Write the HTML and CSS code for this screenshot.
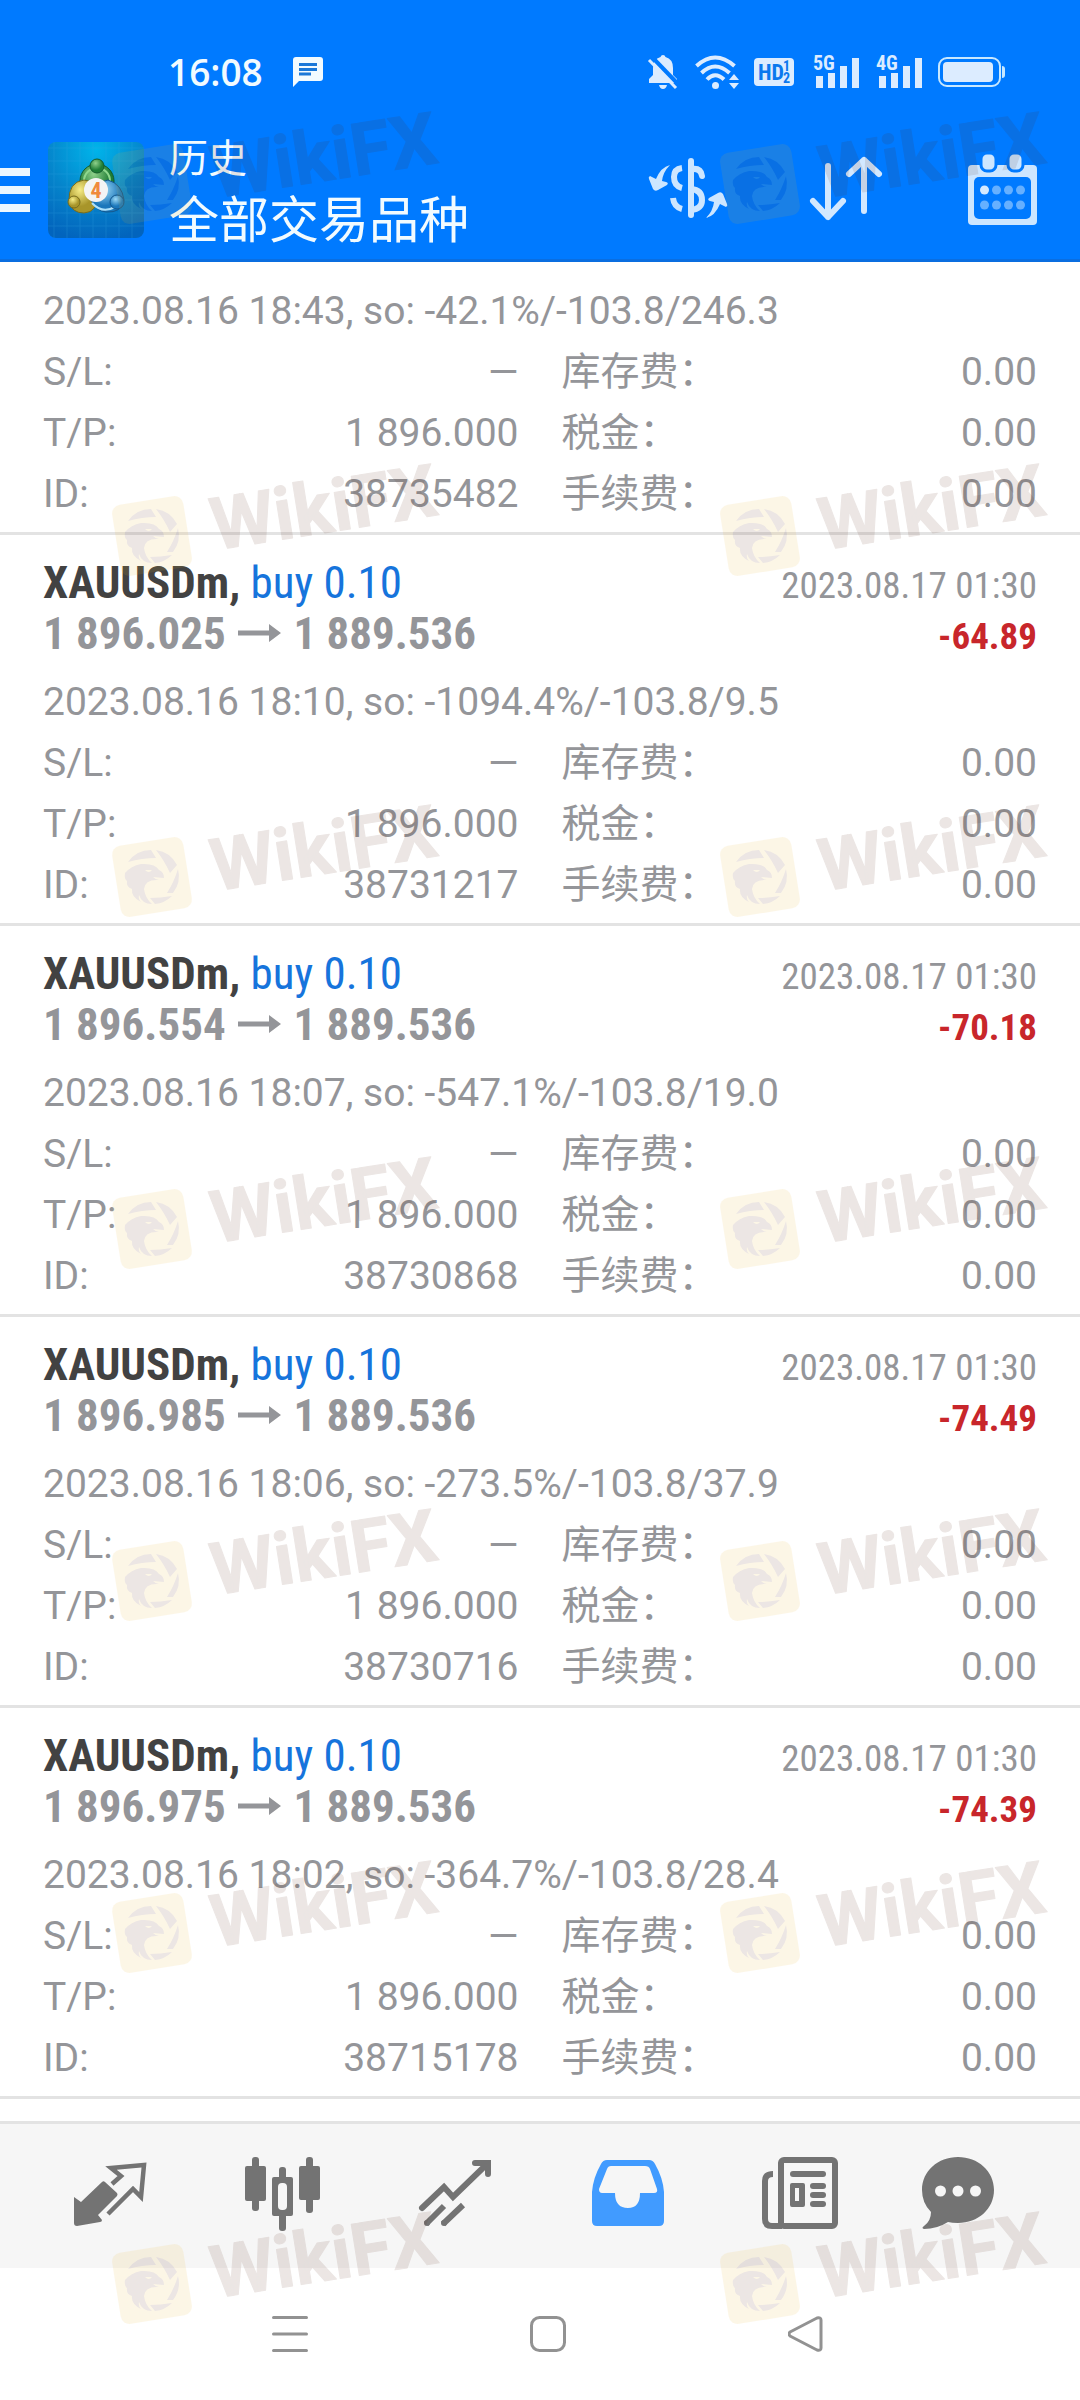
FILE: index.html
```html
<!DOCTYPE html>
<html lang="zh-CN">

<head>
    <meta charset="UTF-8">
    <meta name="viewport" content="width=device-width, initial-scale=1.0">
    <title>历史 - 全部交易品种</title>
    <link rel="stylesheet" href="styles.css">
</head>

<body>
    <header class="header">
        <div class="status-bar">
            <span class="clock">16:08</span>
            <svg class="chat-icon" width="30" height="30" viewBox="0 0 30 30">
                <path fill="#f2fbff" d="M3 0H27Q30 0 30 3V21Q30 24 27 24H6L0 30V3Q0 0 3 0Z" />
                <path stroke="#1a78d8" stroke-width="3" d="M6 7.500H24M6 12.500H24M6 17H18" />
            </svg>
            <div class="status-icons">
                <svg width="30" height="34" viewBox="0 0 30 34">
                    <path fill="#dcecff" d="M15 0Q17 0 17.500 2Q25 4 25 13V20L29 24V28H1V24L5 20V13Q5 4 12.500 2Q13 0 15 0ZM11 30H19Q18 34 15 34Q12 34 11 30Z" />
                    <path stroke="#007aff" stroke-width="4" d="M3 1L31 30" />
                    <path stroke="#dcecff" stroke-width="3" d="M1 5L28 33" />
                </svg>
                <svg class="wifi" width="45" height="34" viewBox="0 0 45 34">
                    <g fill="none" stroke="#dcecff" stroke-width="4">
                        <path d="M1.500 11Q20 -6 39.500 11" />
                        <path d="M6.500 18Q20 5 34.500 18" />
                        <path d="M12 24.500Q20 16 29 24.500" />
                    </g>
                    <circle cx="20.500" cy="30.500" r="3.500" fill="#dcecff" />
                    <path fill="#dcecff" d="M34 25L39 19L44 25ZM34 28L39 34L44 28Z" />
                </svg>
                <svg class="hd" width="40" height="28" viewBox="0 0 40 28">
                    <rect width="40" height="28" rx="4" fill="#dcecff" />
                    <text class="cond" x="4" y="22" font-size="22" fill="#0b78ee">HD</text>
                    <text class="cond" x="29" y="13" font-size="14" fill="#0b78ee">1</text>
                    <text class="cond" x="29" y="25" font-size="14" fill="#0b78ee">2</text>
                </svg>
                <svg class="signal" width="46" height="34" viewBox="0 0 46 34">
                    <text class="cond" x="0" y="15" font-size="20" fill="#dcecff">5G</text>
                    <path fill="#dcecff" d="M3 21H10V33H3ZM15 18H22V33H15ZM27 11H34V33H27ZM39 3H46V33H39Z" />
                </svg>
                <svg class="signal" width="46" height="34" viewBox="0 0 46 34">
                    <text class="cond" x="0" y="15" font-size="20" fill="#dcecff">4G</text>
                    <path fill="#dcecff" d="M3 21H10V33H3ZM15 18H22V33H15ZM27 11H34V33H27ZM39 3H46V33H39Z" />
                </svg>
                <svg width="67" height="30" viewBox="0 0 67 30">
                    <rect x="1" y="1" width="61" height="28" rx="8" fill="none" stroke="#c8e8ff" stroke-width="2" />
                    <rect x="5" y="5" width="50" height="20" rx="4" fill="#dcecff" />
                    <path fill="#c8e8ff" d="M64 9Q67 9 67 12V18Q67 21 64 21Z" />
                </svg>
            </div>
        </div>
        <div class="app-bar">
            <button class="menu-button" type="button" aria-label="菜单">
                <svg width="30" height="44" viewBox="0 0 30 44">
                    <path fill="#edf8ff" d="M0 0H30V8H0ZM0 18H30V26H0ZM0 36H30V44H0Z" />
                </svg>
            </button>
            <svg class="app-icon" viewBox="0 0 96 96">
                <defs>
                    <radialGradient id="tile" cx="50%" cy="8%" r="95%">
                        <stop offset="0" stop-color="#00b4ea" />
                        <stop offset="0.550" stop-color="#0584cb" />
                        <stop offset="1" stop-color="#0264bd" />
                    </radialGradient>
                    <radialGradient id="green" cx="40%" cy="30%">
                        <stop offset="0" stop-color="#8fd08a" />
                        <stop offset="1" stop-color="#1f7d35" />
                    </radialGradient>
                    <radialGradient id="gold" cx="40%" cy="30%">
                        <stop offset="0" stop-color="#f6ec86" />
                        <stop offset="1" stop-color="#a8952a" />
                    </radialGradient>
                    <radialGradient id="sky" cx="40%" cy="30%">
                        <stop offset="0" stop-color="#9bd8f5" />
                        <stop offset="1" stop-color="#1b77bb" />
                    </radialGradient>
                </defs>
                <rect width="96" height="96" rx="8" fill="url(#tile)" />
                <path stroke="#38a6e4" stroke-width="1" opacity="0.250" d="M6 0V96M19 0V96M32 0V96M45 0V96M58 0V96M71 0V96M84 0V96M0 6H96M0 19H96M0 32H96M0 45H96M0 58H96M0 71H96M0 84H96" />
                <circle cx="49" cy="39" r="17" fill="url(#green)" stroke="#145c2b" />
                <circle cx="49" cy="39" r="13" fill="none" stroke="#8ed78d" stroke-width="2" />
                <path d="M21 60Q20 40 36 38Q46 38 48 54Q50 70 36 71Q24 71 21 60Z" fill="url(#gold)" stroke="#776c1c" />
                <path d="M43 58Q46 40 60 38Q74 42 76 58Q74 71 58 70Q48 69 43 58Z" fill="url(#sky)" stroke="#14578d" />
                <path d="M44 61Q54 72 67 65" fill="none" stroke="#b0e2fa" stroke-width="2" />
                <circle cx="49" cy="24" r="7" fill="url(#green)" stroke="#145c2b" />
                <circle cx="26" cy="60" r="6" fill="url(#gold)" stroke="#776c1c" />
                <circle cx="69" cy="60" r="7" fill="url(#sky)" stroke="#14578d" />
                <circle cx="48" cy="48" r="12" fill="#f4f4f4" />
                <text class="cond" x="48" y="56" font-size="22" text-anchor="middle" fill="#f08a3c">4</text>
            </svg>
            <div class="titles">
                <h1>历史</h1>
                <p>全部交易品种</p>
            </div>
            <div class="actions">
                <button type="button" aria-label="货币">
                    <svg width="80" height="64" viewBox="0 0 80 64">
                        <g fill="none" stroke="#cde6ff" stroke-width="6">
                            <path stroke-linecap="round" d="M43 5V59" />
                            <path stroke-linecap="round" d="M44 13Q53 12 54 20" />
                            <path d="M43 33Q54 34 54 44Q54 53 43 54" />
                            <path d="M34 12Q26 13 26 21Q26 30 34 32M25 42Q26 51 34 53" />
                        </g>
                        <path id="swap-arrow" fill="#cde6ff" d="M22 9Q13 11 8 23L2 20Q0 21 1 23L5 33Q7 36 10 34L19 29Q21 27 18 26L14 25Q15 16 22 9Z" />
                        <use href="#swap-arrow" transform="rotate(180 40 35.500)" />
                    </svg>
                </button>
                <button type="button" aria-label="排序">
                    <svg width="80" height="68" viewBox="0 0 80 68">
                        <path fill="none" stroke="#d2e8ff" stroke-width="6" stroke-linecap="round" stroke-linejoin="round" d="M20 12V63M5 47L20 63L35 47M56 57V6M41 20L56 6L71 20" />
                    </svg>
                </button>
                <button type="button" aria-label="日期">
                    <svg width="69" height="74" viewBox="0 0 69 74">
                        <rect y="14" width="69" height="60" rx="4" fill="#cde6ff" />
                        <rect x="6" y="26" width="57" height="42" rx="5" fill="#007aff" />
                        <g fill="#cde6ff" stroke="#007aff" stroke-width="3">
                            <rect x="13" y="2" width="15" height="18" rx="6" />
                            <rect x="40" y="2" width="15" height="18" rx="6" />
                        </g>
                        <circle cx="16.500" cy="39" r="4.500" fill="#d5eaff" />
                        <g fill="#66b0ff">
                            <circle cx="28.500" cy="39" r="4.500" />
                            <circle cx="40.500" cy="39" r="4.500" />
                            <circle cx="52.500" cy="39" r="4.500" />
                            <circle cx="16.500" cy="54" r="4.500" />
                            <circle cx="28.500" cy="54" r="4.500" />
                            <circle cx="40.500" cy="54" r="4.500" />
                            <circle cx="52.500" cy="54" r="4.500" />
                        </g>
                    </svg>
                </button>
            </div>
        </div>
    </header>

    <main class="history">
        <!-- first deal is scrolled under the header, only its details show -->
        <section class="deal deal-scrolled">
            <p class="comment">2023.08.16 18:43, so: -42.1%/-103.8/246.3</p>
            <dl class="details">
                <div><dt>S/L:</dt><dd>—</dd></div>
                <div><dt>库存费：</dt><dd>0.00</dd></div>
                <div><dt>T/P:</dt><dd>1 896.000</dd></div>
                <div><dt>税金：</dt><dd>0.00</dd></div>
                <div><dt>ID:</dt><dd>38735482</dd></div>
                <div><dt>手续费：</dt><dd>0.00</dd></div>
            </dl>
        </section>

        <section class="deal">
            <div class="deal-row">
                <h2>XAUUSDm, <span class="side">buy 0.10</span></h2>
                <time>2023.08.17 01:30</time>
            </div>
            <div class="deal-row">
                <p class="prices">1 896.025 <svg class="arrow" viewBox="0 0 43 18"><path d="M0 6.500H31V0L43 9L31 18V11.500H0Z" /></svg> 1 889.536</p>
                <span class="profit">-64.89</span>
            </div>
            <p class="comment">2023.08.16 18:10, so: -1094.4%/-103.8/9.5</p>
            <dl class="details">
                <div><dt>S/L:</dt><dd>—</dd></div>
                <div><dt>库存费：</dt><dd>0.00</dd></div>
                <div><dt>T/P:</dt><dd>1 896.000</dd></div>
                <div><dt>税金：</dt><dd>0.00</dd></div>
                <div><dt>ID:</dt><dd>38731217</dd></div>
                <div><dt>手续费：</dt><dd>0.00</dd></div>
            </dl>
        </section>

        <section class="deal">
            <div class="deal-row">
                <h2>XAUUSDm, <span class="side">buy 0.10</span></h2>
                <time>2023.08.17 01:30</time>
            </div>
            <div class="deal-row">
                <p class="prices">1 896.554 <svg class="arrow" viewBox="0 0 43 18"><path d="M0 6.500H31V0L43 9L31 18V11.500H0Z" /></svg> 1 889.536</p>
                <span class="profit">-70.18</span>
            </div>
            <p class="comment">2023.08.16 18:07, so: -547.1%/-103.8/19.0</p>
            <dl class="details">
                <div><dt>S/L:</dt><dd>—</dd></div>
                <div><dt>库存费：</dt><dd>0.00</dd></div>
                <div><dt>T/P:</dt><dd>1 896.000</dd></div>
                <div><dt>税金：</dt><dd>0.00</dd></div>
                <div><dt>ID:</dt><dd>38730868</dd></div>
                <div><dt>手续费：</dt><dd>0.00</dd></div>
            </dl>
        </section>

        <section class="deal">
            <div class="deal-row">
                <h2>XAUUSDm, <span class="side">buy 0.10</span></h2>
                <time>2023.08.17 01:30</time>
            </div>
            <div class="deal-row">
                <p class="prices">1 896.985 <svg class="arrow" viewBox="0 0 43 18"><path d="M0 6.500H31V0L43 9L31 18V11.500H0Z" /></svg> 1 889.536</p>
                <span class="profit">-74.49</span>
            </div>
            <p class="comment">2023.08.16 18:06, so: -273.5%/-103.8/37.9</p>
            <dl class="details">
                <div><dt>S/L:</dt><dd>—</dd></div>
                <div><dt>库存费：</dt><dd>0.00</dd></div>
                <div><dt>T/P:</dt><dd>1 896.000</dd></div>
                <div><dt>税金：</dt><dd>0.00</dd></div>
                <div><dt>ID:</dt><dd>38730716</dd></div>
                <div><dt>手续费：</dt><dd>0.00</dd></div>
            </dl>
        </section>

        <section class="deal">
            <div class="deal-row">
                <h2>XAUUSDm, <span class="side">buy 0.10</span></h2>
                <time>2023.08.17 01:30</time>
            </div>
            <div class="deal-row">
                <p class="prices">1 896.975 <svg class="arrow" viewBox="0 0 43 18"><path d="M0 6.500H31V0L43 9L31 18V11.500H0Z" /></svg> 1 889.536</p>
                <span class="profit">-74.39</span>
            </div>
            <p class="comment">2023.08.16 18:02, so: -364.7%/-103.8/28.4</p>
            <dl class="details">
                <div><dt>S/L:</dt><dd>—</dd></div>
                <div><dt>库存费：</dt><dd>0.00</dd></div>
                <div><dt>T/P:</dt><dd>1 896.000</dd></div>
                <div><dt>税金：</dt><dd>0.00</dd></div>
                <div><dt>ID:</dt><dd>38715178</dd></div>
                <div><dt>手续费：</dt><dd>0.00</dd></div>
            </dl>
        </section>
    </main>

    <nav class="tabs">
        <a href="#quotes" aria-label="行情">
            <svg viewBox="0 0 76 76">
                <path fill="#737373" d="M30 26Q31.500 24.500 33 26L45 37Q46 38.500 45 40L26 59L30 64Q30 66 28 66L5 70Q2 70 2 67V41L9 46Z" />
                <path fill="none" stroke="#737373" stroke-width="4.500" d="M40 28L49 20L39 12L72 9L69 41L61 33L36 58" />
            </svg>
        </a>
        <a href="#charts" aria-label="图表">
            <svg viewBox="0 0 76 76">
                <g fill="#737373">
                    <rect x="7" y="1" width="7" height="54" rx="3" />
                    <rect x="0" y="10" width="21" height="35" rx="2" />
                    <rect x="34" y="11" width="7" height="64" rx="3" />
                    <rect x="27" y="21" width="21" height="39" rx="2" />
                    <rect x="61" y="1" width="7" height="56" rx="3" />
                    <rect x="54" y="10" width="21" height="34" rx="2" />
                </g>
                <rect x="33" y="27" width="9" height="27" rx="4" fill="#f6f6f6" />
            </svg>
        </a>
        <a href="#trade" aria-label="交易">
            <svg viewBox="0 0 76 76">
                <g fill="none" stroke="#737373" stroke-width="6">
                    <path stroke-linecap="round" d="M5 52L27 31L36 41L70 8M58 7H71V18" />
                    <path d="M9 68L27 50M26 68L46 49" />
                </g>
                <circle cx="10" cy="67" r="3" fill="#737373" />
                <circle cx="27" cy="67" r="3" fill="#737373" />
            </svg>
        </a>
        <a class="active" href="#history" aria-label="历史">
            <svg viewBox="0 0 76 76">
                <path fill="#419bff" fill-rule="evenodd" d="M17 4H59Q63 4 65 8Q73 22 74 36V65Q74 70 69 70H7Q2 70 2 65V36Q3 22 11 8Q13 4 17 4ZM21 10Q18 10 17 13L9 33Q9 37 12 37H25Q25 52 38 52Q50 52 50 37H64Q68 37 67 33L60 13Q59 10 55 10Z" />
            </svg>
        </a>
        <a href="#news" aria-label="新闻">
            <svg viewBox="0 0 76 76">
                <g fill="none" stroke="#737373" stroke-width="6">
                    <rect x="19" y="4" width="54" height="66" rx="3" />
                    <path d="M11 18Q3 18 3 25V63Q3 70 10 70H20" />
                </g>
                <g fill="#737373">
                    <rect x="28" y="15" width="36" height="6" rx="3" />
                    <path fill-rule="evenodd" d="M30 27H41Q43 27 43 29V49Q43 51 41 51H30Q28 51 28 49V29Q28 27 30 27ZM33 32V45H37V32Z" />
                    <rect x="48" y="27" width="16" height="6" rx="3" />
                    <rect x="48" y="36" width="16" height="6" rx="3" />
                    <rect x="48" y="45" width="16" height="6" rx="3" />
                </g>
            </svg>
        </a>
        <a href="#chat" aria-label="聊天">
            <svg viewBox="0 0 76 76">
                <path fill="#737373" d="M38 1C58 1 74 15 74 34C74 53 58 67 38 67Q32 67 28 66Q17 73 4 73Q1 72 4 70Q11 65 11 56Q2 47 2 34C2 15 18 1 38 1Z" />
                <g fill="#f6f6f6">
                    <circle cx="20.500" cy="35" r="5.500" />
                    <circle cx="38" cy="35" r="5.500" />
                    <circle cx="55.500" cy="35" r="5.500" />
                </g>
            </svg>
        </a>
    </nav>

    <div class="system-nav">
        <button type="button" aria-label="最近任务">
            <svg viewBox="0 0 36 36">
                <path stroke="#929292" stroke-width="3" stroke-linecap="round" d="M1.500 1.500H34.500M1.500 18H34.500M1.500 34.500H34.500" />
            </svg>
        </button>
        <button type="button" aria-label="主屏幕">
            <svg viewBox="0 0 36 36">
                <rect x="1.500" y="1.500" width="33" height="33" rx="8" fill="none" stroke="#929292" stroke-width="3" />
            </svg>
        </button>
        <button type="button" aria-label="返回">
            <svg viewBox="0 0 36 36">
                <path fill="none" stroke="#929292" stroke-width="3" stroke-linejoin="round" d="M2 20Q0 18 2 16L29 2Q33 1 33 4V32Q33 35 29 34Z" />
            </svg>
        </button>
    </div>

    <svg class="watermarks" aria-hidden="true">
        <defs>
            <g id="watermark" opacity="0.110">
                <rect fill="#edb62a" transform="rotate(-9)" x="-36" y="-36" width="72" height="72" rx="9" />
                <g fill="#582412">
                    <path d="M-24 -15A28 28 0 0 1 -1 -27L4 -19Q-10 -19 -24 -15Z" />
                    <path d="M4 -27A28 28 0 0 1 25 -12L18 -4Q12 -17 4 -27Z" />
                    <path d="M26 -8A28 28 0 0 1 21 16L15 16Q22 5 26 -8Z" />
                    <path d="M20 19A28 28 0 0 1 3 27L-2 21Q8 21 20 19Z" />
                    <path fill-rule="evenodd" d="M-27 -4Q-21 -11 -11 -13Q3 -14 7 -7Q12 -5 12 1L1 0Q4 3 7 3Q-7 2 -8 12Q-7 21 0 27Q-10 27 -13 18Q-14 22 -11 25Q-21 20 -20 12Q-26 10 -25 4Q-28 2 -27 -4ZM-7 -7Q-3 -3 0 -7Z" />
                </g>
                <text class="watermark-text" x="60" y="24" transform="rotate(-9)">WikiFX</text>
            </g>
        </defs>
        <use href="#watermark" x="152" y="184" />
        <use href="#watermark" x="760" y="184" />
        <use href="#watermark" x="152" y="536" />
        <use href="#watermark" x="760" y="536" />
        <use href="#watermark" x="152" y="877" />
        <use href="#watermark" x="760" y="877" />
        <use href="#watermark" x="152" y="1229" />
        <use href="#watermark" x="760" y="1229" />
        <use href="#watermark" x="152" y="1581" />
        <use href="#watermark" x="760" y="1581" />
        <use href="#watermark" x="152" y="1933" />
        <use href="#watermark" x="760" y="1933" />
        <use href="#watermark" x="152" y="2284" />
        <use href="#watermark" x="760" y="2284" />
    </svg>
</body>

</html>
```

FILE: styles.css
```css
/* CSS styles */
* {
    box-sizing: border-box;
}

body {
    position: relative;
    display: flex;
    flex-direction: column;
    min-height: 100vh;
    margin: 0;
    font-family: Roboto, "Noto Sans CJK SC", sans-serif;
    background-color: #fff;
    color: #949599;
}

h1,
h2,
p,
dl,
dd {
    margin: 0;
    font-weight: normal;
}

button {
    padding: 0;
    border: none;
    background: none;
    cursor: pointer;
}

svg {
    display: block;
}

.cond {
    font-family: "Roboto Condensed", Roboto, sans-serif;
    font-weight: bold;
}

/* header */
.header {
    background-color: #007aff;
    border-bottom: 3px solid #0a6ee0;
    color: #f2fbff;
}

.status-bar {
    display: flex;
    align-items: center;
    padding: 55px 75px 32px 168px;
}

.clock {
    font-family: "Open Sans", sans-serif;
    font-size: 37px;
    line-height: 34px;
    font-weight: 600;
}

.chat-icon {
    margin-left: 30px;
}

.status-icons {
    display: flex;
    align-items: center;
    margin-left: auto;
}

.status-icons svg {
    overflow: visible;
}

.wifi {
    margin-left: 17px;
}

.hd {
    margin: 0 2px 0 14px;
}

.signal {
    margin: 0 0 0 17px;
}

.signal + svg:last-child {
    margin-left: 16px;
}

.app-bar {
    display: flex;
    align-items: center;
    height: 138px;
    padding-right: 43px;
}

.app-icon {
    width: 96px;
    height: 96px;
    margin: 0 25px 0 18px;
}

.titles {
    flex: 1;
    margin-top: 12px;
}

.titles h1 {
    font-size: 39px;
    line-height: 50px;
}

.titles p {
    font-size: 50px;
    line-height: 74px;
}

.actions {
    display: flex;
    align-items: center;
    gap: 80px;
    margin-bottom: 4px;
}

/* deals */
.history {
    flex: 1;
}

.deal {
    padding: 22px 43px 7px;
    border-bottom: 3px solid #e3e3e3;
}

.deal-scrolled {
    padding-top: 6px;
}

.deal-row {
    display: flex;
    justify-content: space-between;
    align-items: baseline;
    height: 51px;
    font-family: "Roboto Condensed", Roboto, sans-serif;
    line-height: 51px;
}

.deal-row h2 {
    font-size: 45px;
    font-weight: bold;
    color: #424242;
}

.deal-row .side {
    font-weight: normal;
    color: #1674dc;
}

.deal-row time {
    font-size: 37px;
}

.prices {
    font-size: 45px;
    font-weight: bold;
}

.arrow {
    display: inline-block;
    width: 43px;
    height: 18px;
    margin: 0 2px;
    vertical-align: 7px;
    fill: #949599;
}

.profit {
    font-size: 37px;
    font-weight: bold;
    color: #c8262b;
}

.comment {
    margin-top: 13px;
    font-size: 39px;
    line-height: 61px;
}

.details {
    display: grid;
    grid-template-columns: 1fr 1fr;
    column-gap: 43px;
    font-size: 39px;
    line-height: 61px;
}

.details div {
    display: flex;
    justify-content: space-between;
    height: 61px;
}

/* bottom tabs */
.tabs {
    display: grid;
    grid-template-columns: repeat(5, 6fr) 5fr;
    justify-items: center;
    padding: 32px 50px 36px 24px;
    background-color: #f6f6f6;
    border-top: 3px solid #e3e3e3;
}

.tabs svg {
    width: 76px;
    height: 76px;
}

.system-nav {
    display: flex;
    justify-content: space-between;
    padding: 48px 256px 48px 272px;
}

.system-nav svg {
    width: 36px;
    height: 36px;
}

/* watermark layer over the whole page */
.watermarks {
    position: absolute;
    top: 0;
    left: 0;
    width: 100%;
    height: 100%;
    pointer-events: none;
}

.watermark-text {
    font-size: 73px;
    font-weight: bold;
    fill: #582412;
    stroke: #582412;
    stroke-width: 1px;
    stroke-linejoin: round;
}
```
